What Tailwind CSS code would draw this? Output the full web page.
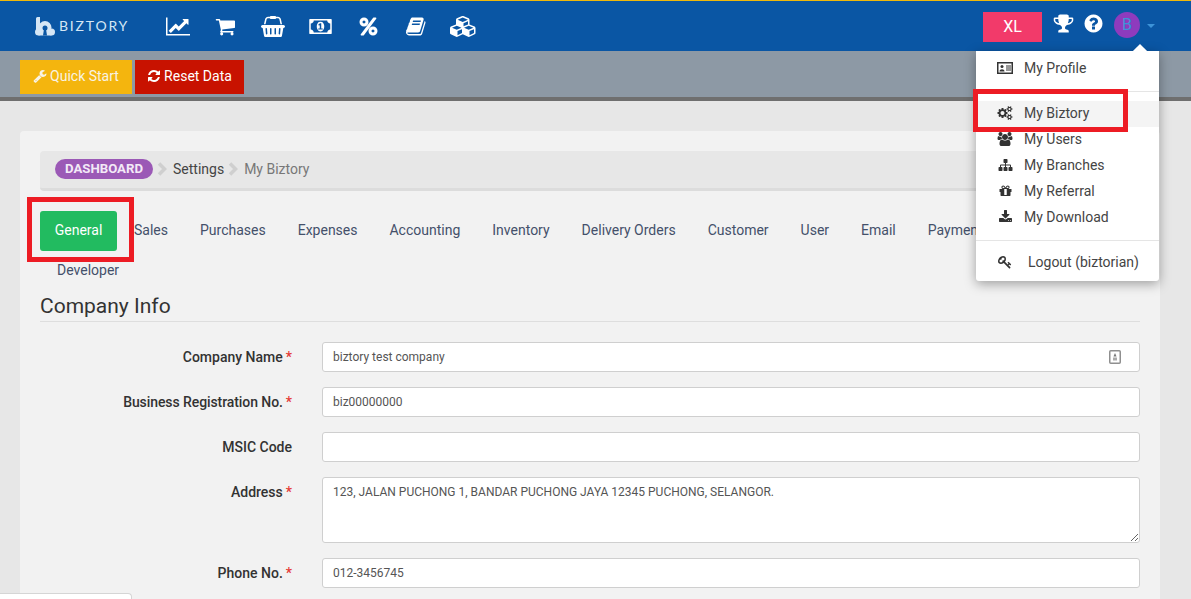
<!DOCTYPE html>
<html lang="en">
  <head>
    <meta charset="UTF-8" />
    <title>Biztory - My Biztory</title>
    <script src="https://cdn.jsdelivr.net/npm/@tailwindcss/browser@4"></script>
  </head>

  <body class="relative h-[599px] overflow-hidden bg-[#e7e7e7] font-['Roboto',sans-serif] text-sm text-[#333]">

    <!-- Top bar -->
    <header class="flex h-[51px] items-center border-t border-[#f0b90b] bg-[#0a56a4] text-white">
      <div class="ml-[35px] flex w-[131px] items-center">
        <svg class="h-[19px] w-[20px] text-[#d5e6f5]" viewBox="0 0 20 19" fill="currentColor">
          <path d="M1 1.500A1.500 1.500 0 0 1 2.500 0H5v13H1z" />
          <circle cx="10" cy="10.500" r="6.500" />
          <circle cx="3.500" cy="15" r="3.500" />
          <circle cx="16.500" cy="15" r="3.500" />
          <rect x="3.500" y="13" width="13" height="5.500" />
          <circle cx="10" cy="11" r="2.500" fill="#0a56a4" />
          <path d="M9 12h2l1 6.500H8z" fill="#0a56a4" />
        </svg>
        <span class="ml-[4px] font-['Lato',sans-serif] text-[14px] tracking-[1.8px] text-[#d5e6f5]">BIZTORY</span>
      </div>
      <nav class="flex items-center">
        <svg class="h-[21px] w-[24px]" viewBox="0 0 2048 1792" fill="currentColor"><path d="M2048 1536v128h-2048v-1536h128v1408h1920zm-128-1248v435q0 21-19.5 29.5t-35.5-7.5l-121-121-633 633q-10 10-23 10t-23-10l-233-233-416 416-192-192 585-585q10-10 23-10t23 10l233 233 464-464-121-121q-16-16-7.500-35.500t29.500-19.500h435q14 0 23 9t9 23z" /></svg>
        <svg class="ml-[25px] h-[21px] w-[20px]" viewBox="0 0 1728 1792" fill="currentColor"><path d="M704 1536q0 52-38 90t-90 38-90-38-38-90 38-90 90-38 90 38 38 90zm896 0q0 52-38 90t-90 38-90-38-38-90 38-90 90-38 90 38 38 90zm128-1088v512q0 24-16.500 42.500t-40.500 21.500l-1044 122q13 60 13 70 0 16-24 64h920q26 0 45 19t19 45-19 45-45 19h-1024q-26 0-45-19t-19-45q0-11 8-31.500t16-36 21.500-40 15.500-29.500l-177-823h-204q-26 0-45-19t-19-45 19-45 45-19h256q16 0 28.500 6.500t19.500 15.500 13 24.500 8 26 5.500 29.500 4.500 26h1201q26 0 45 19t19 45z" /></svg>
        <svg class="ml-[26px] h-[21px] w-[24px]" viewBox="0 0 2048 1792" fill="currentColor"><path d="M1920 768q53 0 90.500 37.500t37.500 90.500-37.500 90.500-90.500 37.500h-15l-115 662q-8 46-44 76t-82 30h-1280q-46 0-82-30t-44-76l-115-662h-15q-53 0-90.500-37.500t-37.500-90.500 37.500-90.500 90.500-37.500h1792zm-1435 800q26-2 43.500-22.500t15.500-46.500l-32-416q-2-26-22.500-43.500t-46.500-15.500-43.500 22.500-15.500 46.500l32 416q2 25 20.500 42t43.500 17h5zm411-64v-416q0-26-19-45t-45-19-45 19-19 45v416q0 26 19 45t45 19 45-19 19-45zm384 0v-416q0-26-19-45t-45-19-45 19-19 45v416q0 26 19 45t45 19 45-19 19-45zm352 5l32-416q2-26-15.500-46.500t-43.500-22.500-46.500 15.500-22.500 43.500l-32 416q-2 26 15.500 46.500t43.500 22.500h5q25 0 43.500-17t20.500-42zm-1156-1217l-93 412h-132l101-441q19-88 89-143.500t160-55.500h167q0-26 19-45t45-19h384q26 0 45 19t19 45h167q90 0 160 55.500t89 143.500l101 441h-132l-93-412q-11-44-45.500-72t-79.500-28h-167q0 26-19 45t-45 19h-384q-26 0-45-19t-19-45h-167q-45 0-79.500 28t-45.500 72z" /></svg>
        <svg class="ml-[24px] h-[21px] w-[23px]" viewBox="0 0 1920 1792" fill="currentColor"><path d="M768 1152h384v-96h-128v-448h-114l-148 137 77 80q42-37 55-57h2v288h-128v96zm512-256q0 70-21 142t-59.500 134-101.500 101-138 39-138-39-101.500-101-59.500-134-21-142 21-142 59.500-134 101.500-101 138-39 138 39 101.500 101 59.500 134 21 142zm512 256v-512q-106 0-181-75t-75-181h-1152q0 106-75 181t-181 75v512q106 0 181 75t75 181h1152q0-106 75-181t181-75zm128-832v1152q0 26-19 45t-45 19h-1792q-26 0-45-19t-19-45v-1152q0-26 19-45t45-19h1792q26 0 45 19t19 45z" /></svg>
        <svg class="ml-[26px] h-[21px] w-[21px]" viewBox="0 0 1792 1792" fill="currentColor"><path d="M1408 1280q0-52-38-90t-90-38-90 38-38 90 38 90 90 38 90-38 38-90zm-768-768q0-52-38-90t-90-38-90 38-38 90 38 90 90 38 90-38 38-90zm1024 768q0 159-112.500 271.500t-271.500 112.500-271.500-112.500-112.500-271.500 112.500-271.500 271.500-112.500 271.500 112.500 112.500 271.500zm-96-1088q0 20-13 38l-1056 1408q-19 26-51 26h-160q-26 0-45-19t-19-45q0-20 13-38l1056-1408q19-26 51-26h160q26 0 45 19t19 45zm-672 320q0 159-112.500 271.500t-271.500 112.500-271.500-112.500-112.500-271.500 112.500-271.500 271.500-112.500 271.500 112.500 112.500 271.500z" /></svg>
        <svg class="ml-[27px] h-[21px] w-[21px]" viewBox="0 0 1792 1792" fill="currentColor"><path d="M1639 478q40 57 18 129l-275 906q-19 64-76.500 107.500t-122.500 43.500h-923q-77 0-148.500-53.500t-99.500-131.500q-24-67-2-127 0-4 3-27t4-37q1-8-3-21.500t-3-19.500q2-11 8-21t16.500-23.500 16.500-23.500q23-38 45-91.500t30-91.500q3-10 .5-30t-.5-28q3-11 17-28t17-23q21-36 42-92t25-90q1-9-2.500-32t.5-28q4-13 22-30.500t22-22.500q19-26 42.500-84.500t27.500-96.500q1-8-3-25.500t-2-26.500q2-8 9-18t18-23 17-21q8-12 16.500-30.500t15-35 16-36 19.500-32 26.500-23.500 36-11.500 47.500 5.500l-1 3q38-9 51-9h761q74 0 114 56t18 130l-274 906q-36 119-71.500 153.500t-128.500 34.500h-869q-27 0-38 15-11 16-1 43 24 70 144 70h923q29 0 56-15.500t35-41.500l300-987q7-22 5-57 38 15 59 43zm-1064 2q-4 13 2 22.500t20 9.500h608q13 0 25.500-9.500t16.500-22.500l21-64q4-13-2-22.500t-20-9.500h-608q-13 0-25.500 9.500t-16.500 22.500zm-83 256q-4 13 2 22.500t20 9.500h608q13 0 25.500-9.500t16.500-22.500l21-64q4-13-2-22.500t-20-9.500h-608q-13 0-25.500 9.500t-16.500 22.500z" /></svg>
        <svg class="ml-[23px] h-[21px] w-[27px]" viewBox="0 0 2304 1792" fill="currentColor"><path d="M640 1632l384-192v-314l-384 164v342zm-64-454l404-173-404-173-404 173zm1088 454l384-192v-314l-384 164v342zm-64-454l404-173-404-173-404 173zm-448-293l384-165v-266l-384 164v267zm-64-379l441-189-441-189-441 189zm1088 518v416q0 36-19 67t-52 47l-448 224q-25 14-57 14t-57-14l-448-224q-5-2-7-4-2 2-7 4l-448 224q-25 14-57 14t-57-14l-448-224q-33-16-52-47t-19-67v-416q0-38 21.500-70t56.500-48l434-186v-400q0-38 21.500-70t56.500-48l448-192q23-10 50-10t50 10l448 192q35 16 56.500 48t21.500 70v400l434 186q36 16 57 48t21 70z" /></svg>
      </nav>
      <div class="ml-auto mr-[36px] flex items-center">
        <button class="mt-[2px] h-[30px] w-[59px] bg-[#f23a6a] text-base text-white">XL</button>
        <svg class="-mt-[5px] ml-[11px] h-[21px] w-[21px]" viewBox="0 0 1792 1792" fill="currentColor"><path d="M522 883q-74-162-74-371h-256v96q0 78 94.500 162t235.500 113zm1078-275v-96h-256q0 209-74 371 141-29 235.500-113t94.500-162zm128-128v128q0 71-41.500 143t-112 130-173 97.500-215.500 44.500q-42 54-95 95-38 34-52.500 72.500t-14.500 89.500q0 54 30.500 91t97.500 37q75 0 133.500 45.500t58.500 114.500v64q0 14-9 23t-23 9h-832q-14 0-23-9t-9-23v-64q0-69 58.500-114.500t133.500-45.500q67 0 97.500-37t30.500-91q0-51-14.500-89.500t-52.500-72.500q-53-41-95-95-113-5-215.500-44.500t-173-97.500-112-130-41.500-143v-128q0-40 28-68t68-28h288v-96q0-66 47-113t113-47h576q66 0 113 47t47 113v96h288q40 0 68 28t28 68z" /></svg>
        <svg class="-mt-[5px] ml-[9px] h-[21px] w-[21px]" viewBox="0 0 1792 1792" fill="currentColor"><path d="M1024 1376v-192q0-14-9-23t-23-9h-192q-14 0-23 9t-9 23v192q0 14 9 23t23 9h192q14 0 23-9t9-23zm256-672q0-88-55.500-163t-138.500-116-170-41q-243 0-371 213-15 24 8 42l132 100q7 6 19 6 16 0 25-12 53-68 86-92 34-24 86-24 48 0 85.500 26t37.500 59q0 38-20 61t-68 45q-63 28-115.500 86.500t-52.500 125.500v36q0 14 9 23t23 9h192q14 0 23-9t9-23q0-19 21.500-49.500t54.500-49.500q32-18 49-28.500t46-35 44.500-48 28-60.500 12.500-81zm384 192q0 209-103 385.500t-279.500 279.500-385.500 103-385.500-103-279.500-279.500-103-385.500 103-385.500 279.500-279.500 385.500-103 385.500 103 279.500 279.500 103 385.500z" /></svg>
        <div class="-mt-[2px] ml-[10px] flex h-[26px] w-[26px] items-center justify-center rounded-full bg-[#8e3bbd] text-base text-[#3d93d8]">B</div>
        <div class="ml-[7px] h-0 w-0 border-x-[4px] border-t-[4px] border-x-transparent border-t-[#3d93d8]"></div>
      </div>
    </header>

    <!-- Quick actions -->
    <div class="flex h-[50px] items-start gap-[3px] border-b-4 border-[#6f6f6f] bg-[#8d99a5] pl-[20px] pt-[9px] text-white">
      <button class="flex h-[34px] w-[112px] items-center justify-center gap-[3px] bg-[#f4b50e] pb-[2px] text-[#f8f3e4]">
        <svg class="h-[14px] w-[14px]" viewBox="0 0 1792 1792" fill="currentColor"><path d="M448 1472q0-26-19-45t-45-19-45 19-19 45 19 45 45 19 45-19 19-45zm644-420l-682 682q-37 37-90 37-52 0-91-37l-106-108q-38-36-38-90 0-53 38-91l681-681q39 98 114.500 173.500t173.500 114.500zm634-435q0 39-23 106-47 134-164.500 217.500t-258.500 83.500q-185 0-316.500-131.500t-131.500-316.500 131.500-316.500 316.500-131.500q58 0 121.500 16.500t107.500 46.500q16 11 16 28t-16 28l-293 169v224l193 107q5-3 79-48.500t135.500-81 70.500-35.500q15 0 23.500 10t8.500 25z" /></svg>
        Quick Start
      </button>
      <button class="flex h-[34px] w-[109px] items-center justify-center gap-[3px] bg-[#c81200] pb-[2px]">
        <svg class="h-[14px] w-[14px]" viewBox="0 0 1792 1792" fill="currentColor"><path d="M1639 1056q0 5-1 7-64 268-268 434.500t-478 166.500q-146 0-282.500-55t-243.500-157l-129 129q-19 19-45 19t-45-19-19-45v-448q0-26 19-45t45-19h448q26 0 45 19t19 45-19 45l-137 137q71 66 161 102t187 36q134 0 250-65t186-179q11-17 53-117 8-23 30-23h192q13 0 22.500 9.500t9.500 22.500zm25-800v448q0 26-19 45t-45 19h-448q-26 0-45-19t-19-45 19-45l138-138q-148-137-349-137-134 0-250 65t-186 179q-11 17-53 117-8 23-30 23h-199q-13 0-22.500-9.500t-9.500-22.500v-7q65-268 270-434.500t480-166.500q146 0 284 55.500t245 156.500l130-129q19-19 45-19t45 19 19 45z" /></svg>
        Reset Data
      </button>
    </div>

    <!-- Page -->
    <main class="ml-[20px] mt-[30px] h-[468px] w-[1140px] rounded-t-[4px] bg-[#f2f2f2] px-[20px] pt-[20px]">
      <!-- Breadcrumb -->
      <div class="flex h-[40px] items-center rounded-[4px] border-b-[3px] border-[#dcdcdc] bg-[#e7e7e7] pb-[1px] pl-[15px]">
        <span class="flex h-[20px] w-[98px] items-center justify-center rounded-full bg-[#9b59b6] text-[13.200px] font-bold text-[#f3e9f7]">DASHBOARD</span>
        <svg class="ml-[4px] mr-[5px] h-[14px] w-[11px] text-[#cfcfcf]" viewBox="0 0 11 14" fill="none" stroke="currentColor" stroke-width="3.500"><path d="M2 1.500 7.500 7 2 12.500" /></svg>
        <span class="text-[#444]">Settings</span>
        <svg class="ml-[4px] mr-[5px] h-[14px] w-[11px] text-[#cfcfcf]" viewBox="0 0 11 14" fill="none" stroke="currentColor" stroke-width="3.500"><path d="M2 1.500 7.500 7 2 12.500" /></svg>
        <span class="text-[#777]">My Biztory</span>
      </div>

      <!-- Tabs -->
      <div class="mt-[20px] flex flex-wrap text-[#44506a]">
        <a class="flex h-[40px] w-[77px] items-center justify-center rounded-[3px] bg-[#22bb60] pb-[2px] text-white">General</a>
        <a class="flex h-[40px] items-center pb-[2px] pl-[17px] pr-[16px]">Sales</a>
        <a class="flex h-[40px] items-center px-[16px] pb-[2px]">Purchases</a>
        <a class="flex h-[40px] items-center px-[16px] pb-[2px]">Expenses</a>
        <a class="flex h-[40px] items-center px-[16px] pb-[2px]">Accounting</a>
        <a class="flex h-[40px] items-center px-[16px] pb-[2px]">Inventory</a>
        <a class="flex h-[40px] items-center px-[16px] pb-[2px]">Delivery Orders</a>
        <a class="flex h-[40px] items-center px-[16px] pb-[2px]">Customer</a>
        <a class="flex h-[40px] items-center px-[16px] pb-[2px]">User</a>
        <a class="flex h-[40px] items-center px-[16px] pb-[2px]">Email</a>
        <a class="flex h-[40px] items-center px-[16px] pb-[2px]">Payment</a>
        <div class="h-0 basis-full"></div>
        <a class="flex h-[39px] items-center pb-[2px] pl-[17px]">Developer</a>
      </div>

      <!-- Company info -->
      <h2 class="flex h-[32px] items-center border-b border-[#dedede] pt-[1px] text-[21px] text-[#333]">Company Info</h2>

      <form class="mt-[20px] grid grid-cols-[252px_1fr] gap-x-[30px] gap-y-[15px]">
        <label class="flex h-[30px] items-center justify-end font-medium">Company Name<span class="ml-[3px] text-[#e53935]">*</span></label>
        <div class="relative">
          <input class="h-[30px] w-full rounded-[3px] border border-[#cfcfcf] bg-white px-[10px] text-xs text-[#555]" value="biztory test company" />
          <svg class="absolute right-[19px] top-[8px] h-[14px] w-[12px]" viewBox="0 0 12 14"><rect x=".750" y=".750" width="10.500" height="12.500" rx="1" fill="#fff" stroke="#8f8f8f" stroke-width="1.500" /><path d="M6 3 7.500 6.500h-3z" fill="#777" /><rect x="4" y="7.500" width="4" height="3" fill="#aaa" /></svg>
        </div>

        <label class="flex h-[30px] items-center justify-end font-medium tracking-[-0.08px]">Business Registration No.<span class="ml-[3px] text-[#e53935]">*</span></label>
        <input class="h-[30px] w-full rounded-[3px] border border-[#cfcfcf] bg-white px-[10px] text-xs text-[#555]" value="biz00000000" />

        <label class="flex h-[30px] items-center justify-end font-medium">MSIC Code</label>
        <input class="h-[30px] w-full rounded-[3px] border border-[#cfcfcf] bg-white px-[10px] text-xs text-[#555]" />

        <label class="flex h-[30px] items-center justify-end font-medium">Address<span class="ml-[3px] text-[#e53935]">*</span></label>
        <textarea class="block h-[66px] w-full rounded-[3px] border border-[#cfcfcf] bg-white px-[10px] py-[6px] text-xs text-[#555]">123, JALAN PUCHONG 1, BANDAR PUCHONG JAYA 12345 PUCHONG, SELANGOR.</textarea>

        <label class="flex h-[30px] items-center justify-end font-medium">Phone No.<span class="ml-[3px] text-[#e53935]">*</span></label>
        <input class="h-[30px] w-full rounded-[3px] border border-[#cfcfcf] bg-white px-[10px] text-xs text-[#555]" value="012-3456745" />
      </form>
    </main>

    <!-- Dropdown -->
    <div class="absolute left-[976px] top-[51px] h-[230px] w-[183px] rounded-b-[3px] bg-white text-[#444] shadow-[0_3px_12px_rgba(0,0,0,0.35)]">
      <div class="absolute -top-[5px] right-[14px] h-[10px] w-[10px] rotate-45 bg-white"></div>
      <a class="relative mt-[4px] flex h-[26px] items-center">
        <svg class="ml-[21px] h-[14px] w-[16px] text-[#333]" viewBox="0 0 16 14" fill="none" stroke="currentColor"><rect x=".750" y="1.750" width="14.500" height="10.500" stroke-width="1.500" /><circle cx="5" cy="5.500" r="1.500" fill="currentColor" stroke="none" /><path d="M2.500 10.500c0-3 5-3 5 0z" fill="currentColor" stroke="none" /><path d="M9 5h5M9 7h5M9 9h5" /></svg>
        <span class="ml-[11px]">My Profile</span>
      </a>
      <div class="mt-[10px] h-px bg-[#e5e5e5]"></div>
      <a class="mt-[9px] flex h-[26px] items-center bg-[#f4f4f4] pb-[2px]">
        <svg class="ml-[21px] h-[14px] w-[16px] text-[#333]" viewBox="0 0 1920 1792" fill="currentColor"><path d="M896 896q0-106-75-181t-181-75-181 75-75 181 75 181 181 75 181-75 75-181zm768 512q0-52-38-90t-90-38-90 38-38 90q0 53 37.500 90.500t90.500 37.500 90.500-37.500 37.500-90.500zm0-1024q0-52-38-90t-90-38-90 38-38 90q0 53 37.500 90.500t90.500 37.500 90.500-37.500 37.500-90.500zm-384 421v185q0 10-7 19.500t-16 10.500l-155 24q-11 35-32 76 34 48 90 115 7 11 7 20 0 12-7 19-23 30-82.500 89.500t-78.500 59.500q-11 0-21-7l-115-90q-37 19-77 31-11 108-23 155-7 24-30 24h-186q-11 0-20-7.500t-10-17.500l-23-153q-34-10-75-31l-118 89q-7 7-20 7-11 0-21-8-144-133-144-160 0-9 7-19 10-14 41-53t47-61q-23-44-35-82l-152-24q-10-1-17-9.500t-7-19.500v-185q0-10 7-19.500t16-10.500l155-24q11-35 32-76-34-48-90-115-7-11-7-20 0-12 7-20 22-30 82-89t79-59q11 0 21 7l115 90q34-18 77-32 11-108 23-154 7-24 30-24h186q11 0 20 7.500t10 17.500l23 153q34 10 75 31l118-89q8-7 20-7 11 0 21 8 144 133 144 160 0 8-7 19-12 16-42 54t-45 60q23 48 34 82l152 23q10 2 17 10.500t7 19.500zm640 533v140q0 16-149 31-12 27-30 52 51 113 51 138 0 4-4 7-122 71-124 71-8 0-46-47t-52-68q-20 2-30 2t-30-2q-14 21-52 68t-46 47q-2 0-124-71-4-3-4-7 0-25 51-138-18-25-30-52-149-15-149-31v-140q0-16 149-31 13-29 30-52-51-113-51-138 0-4 4-7 4-2 35-20t59-34 30-16q8 0 46 46.500t52 67.500q20-2 30-2t30 2q51-71 92-112l6-2q4 0 124 70 4 3 4 7 0 25-51 138 17 23 30 52 149 15 149 31zm0-1024v140q0 16-149 31-12 27-30 52 51 113 51 138 0 4-4 7-122 71-124 71-8 0-46-47t-52-68q-20 2-30 2t-30-2q-14 21-52 68t-46 47q-2 0-124-71-4-3-4-7 0-25 51-138-18-25-30-52-149-15-149-31v-140q0-16 149-31 13-29 30-52-51-113-51-138 0-4 4-7 4-2 35-20t59-34 30-16q8 0 46 46.500t52 67.500q20-2 30-2t30 2q51-71 92-112l6-2q4 0 124 70 4 3 4 7 0 25-51 138 17 23 30 52 149 15 149 31z" /></svg>
        <span class="ml-[11px]">My Biztory</span>
      </a>
      <a class="flex h-[26px] items-center pb-[2px]">
        <svg class="ml-[21px] h-[14px] w-[16px] text-[#333]" viewBox="0 0 1920 1792" fill="currentColor"><path d="M593 896q-162 5-265 128h-134q-82 0-138-40.500t-56-118.500q0-353 124-353 6 0 43.500 21t97.500 42.500 119 21.500q67 0 133-23-5 37-5 66 0 139 81 256zm1071 637q0 120-73 189.500t-194 69.500h-874q-121 0-194-69.500t-73-189.500q0-53 3.500-103.500t14-109 26.500-108.500 43-97.500 62-81 85.500-53.500 111.500-20q10 0 43 21.500t73 48 107 48 135 21.500 135-21.500 107-48 73-48 43-21.500q61 0 111.500 20t85.500 53.500 62 81 43 97.500 26.500 108.500 14 109 3.500 103.500zm-1024-1277q0 106-75 181t-181 75-181-75-75-181 75-181 181-75 181 75 75 181zm704 384q0 159-112.500 271.500t-271.500 112.500-271.500-112.500-112.500-271.500 112.500-271.500 271.500-112.500 271.500 112.500 112.500 271.500zm576 225q0 78-56 118.500t-138 40.500h-134q-103-123-265-128 81-117 81-256 0-29-5-66 66 23 133 23 59 0 119-21.500t97.500-42.500 43.500-21q124 0 124 353zm-128-609q0 106-75 181t-181 75-181-75-75-181 75-181 181-75 181 75 75 181z" /></svg>
        <span class="ml-[11px]">My Users</span>
      </a>
      <a class="flex h-[26px] items-center pb-[2px]">
        <svg class="ml-[22px] h-[14px] w-[15px] text-[#333]" viewBox="0 0 1792 1792" fill="currentColor"><path d="M1792 1248v320q0 40-28 68t-68 28h-320q-40 0-68-28t-28-68v-320q0-40 28-68t68-28h96v-192h-512v192h96q40 0 68 28t28 68v320q0 40-28 68t-68 28h-320q-40 0-68-28t-28-68v-320q0-40 28-68t68-28h96v-192h-512v192h96q40 0 68 28t28 68v320q0 40-28 68t-68 28h-320q-40 0-68-28t-28-68v-320q0-40 28-68t68-28h96v-192q0-52 38-90t90-38h512v-192h-96q-40 0-68-28t-28-68v-320q0-40 28-68t68-28h320q40 0 68 28t28 68v320q0 40-28 68t-68 28h-96v192h512q52 0 90 38t38 90v192h96q40 0 68 28t28 68z" /></svg>
        <span class="ml-[11px]">My Branches</span>
      </a>
      <a class="flex h-[26px] items-center pb-[2px]">
        <svg class="ml-[22px] h-[14px] w-[15px] text-[#333]" viewBox="0 0 1792 1792" fill="currentColor"><path d="M1056 1356v-716h-320v716q0 25 18 38.500t46 13.500h192q28 0 46-13.500t18-38.500zm-456-844h195l-126-161q-26-31-69-31-40 0-68 28t-28 68 28 68 68 28zm688-96q0-40-28-68t-68-28q-43 0-69 31l-125 161h194q40 0 68-28t28-68zm376 256v320q0 14-9 23t-23 9h-96v416q0 40-28 68t-68 28h-1088q-40 0-68-28t-28-68v-416h-96q-14 0-23-9t-9-23v-320q0-14 9-23t23-9h440q-93 0-158.500-65.500t-65.500-158.500 65.500-158.500 158.500-65.500q107 0 168 77l128 165 128-165q61-77 168-77 93 0 158.500 65.500t65.500 158.500-65.500 158.500-158.500 65.500h440q14 0 23 9t9 23z" /></svg>
        <span class="ml-[11px]">My Referral</span>
      </a>
      <a class="flex h-[26px] items-center pb-[2px]">
        <svg class="ml-[22px] h-[14px] w-[15px] text-[#333]" viewBox="0 0 1792 1792" fill="currentColor"><path d="M1344 1344q0-26-19-45t-45-19-45 19-19 45 19 45 45 19 45-19 19-45zm256 0q0-26-19-45t-45-19-45 19-19 45 19 45 45 19 45-19 19-45zm128-224v320q0 40-28 68t-68 28h-1472q-40 0-68-28t-28-68v-320q0-40 28-68t68-28h465l135 136q58 56 136 56t136-56l136-136h464q40 0 68 28t28 68zm-325-569q17 41-14 70l-448 448q-18 19-45 19t-45-19l-448-448q-31-29-14-70 17-39 59-39h256v-448q0-26 19-45t45-19h256q26 0 45 19t19 45v448h256q42 0 59 39z" /></svg>
        <span class="ml-[11px]">My Download</span>
      </a>
      <div class="mt-[9px] h-px bg-[#e5e5e5]"></div>
      <a class="mt-[9px] flex h-[26px] items-center pb-[2px]">
        <svg class="ml-[22px] h-[14px] w-[14px] text-[#333]" viewBox="0 0 1792 1792" fill="currentColor"><path d="M832 512q0-80-56-136t-136-56-136 56-56 136q0 42 19 83-41-19-83-19-80 0-136 56t-56 136 56 136 136 56 136-56 56-136q0-42-19-83 41 19 83 19 80 0 136-56t56-136zm851 704q0 17-49 66t-66 49q-9 0-28.500-16t-36.500-33-38.500-40-24.500-26l-96 96 220 220q28 28 28 68 0 42-39 81t-81 39q-40 0-68-28l-671-671q-176 131-365 131-163 0-265.500-102.500t-102.500-265.500q0-160 95-313t248-248 313-95q163 0 265.500 102.500t102.500 265.500q0 189-131 365l355 355 96-96q-3-3-26-24.500t-40-38.500-33-36.500-16-28.500q0-17 49-66t66-49q13 0 23 10 6 6 46 44.500t82 79.500 86.500 86 73 78 28.500 41z" /></svg>
        <span class="ml-[16px]">Logout (biztorian)</span>
      </a>
    </div>

    <!-- Red annotation frames -->
    <div class="absolute left-[973px] top-[89px] h-[43px] w-[155px] border-[5px] border-[#ed1c24]"></div>
    <div class="absolute left-[27px] top-[197px] h-[65px] w-[107px] border-[5px] border-[#ed1c24]"></div>

    <!-- Bottom left tab -->
    <div class="absolute bottom-0 left-0 h-[6px] w-[132px] rounded-tr-[4px] border-r border-t border-[#d5d5d5] bg-white"></div>
  </body>
</html>
